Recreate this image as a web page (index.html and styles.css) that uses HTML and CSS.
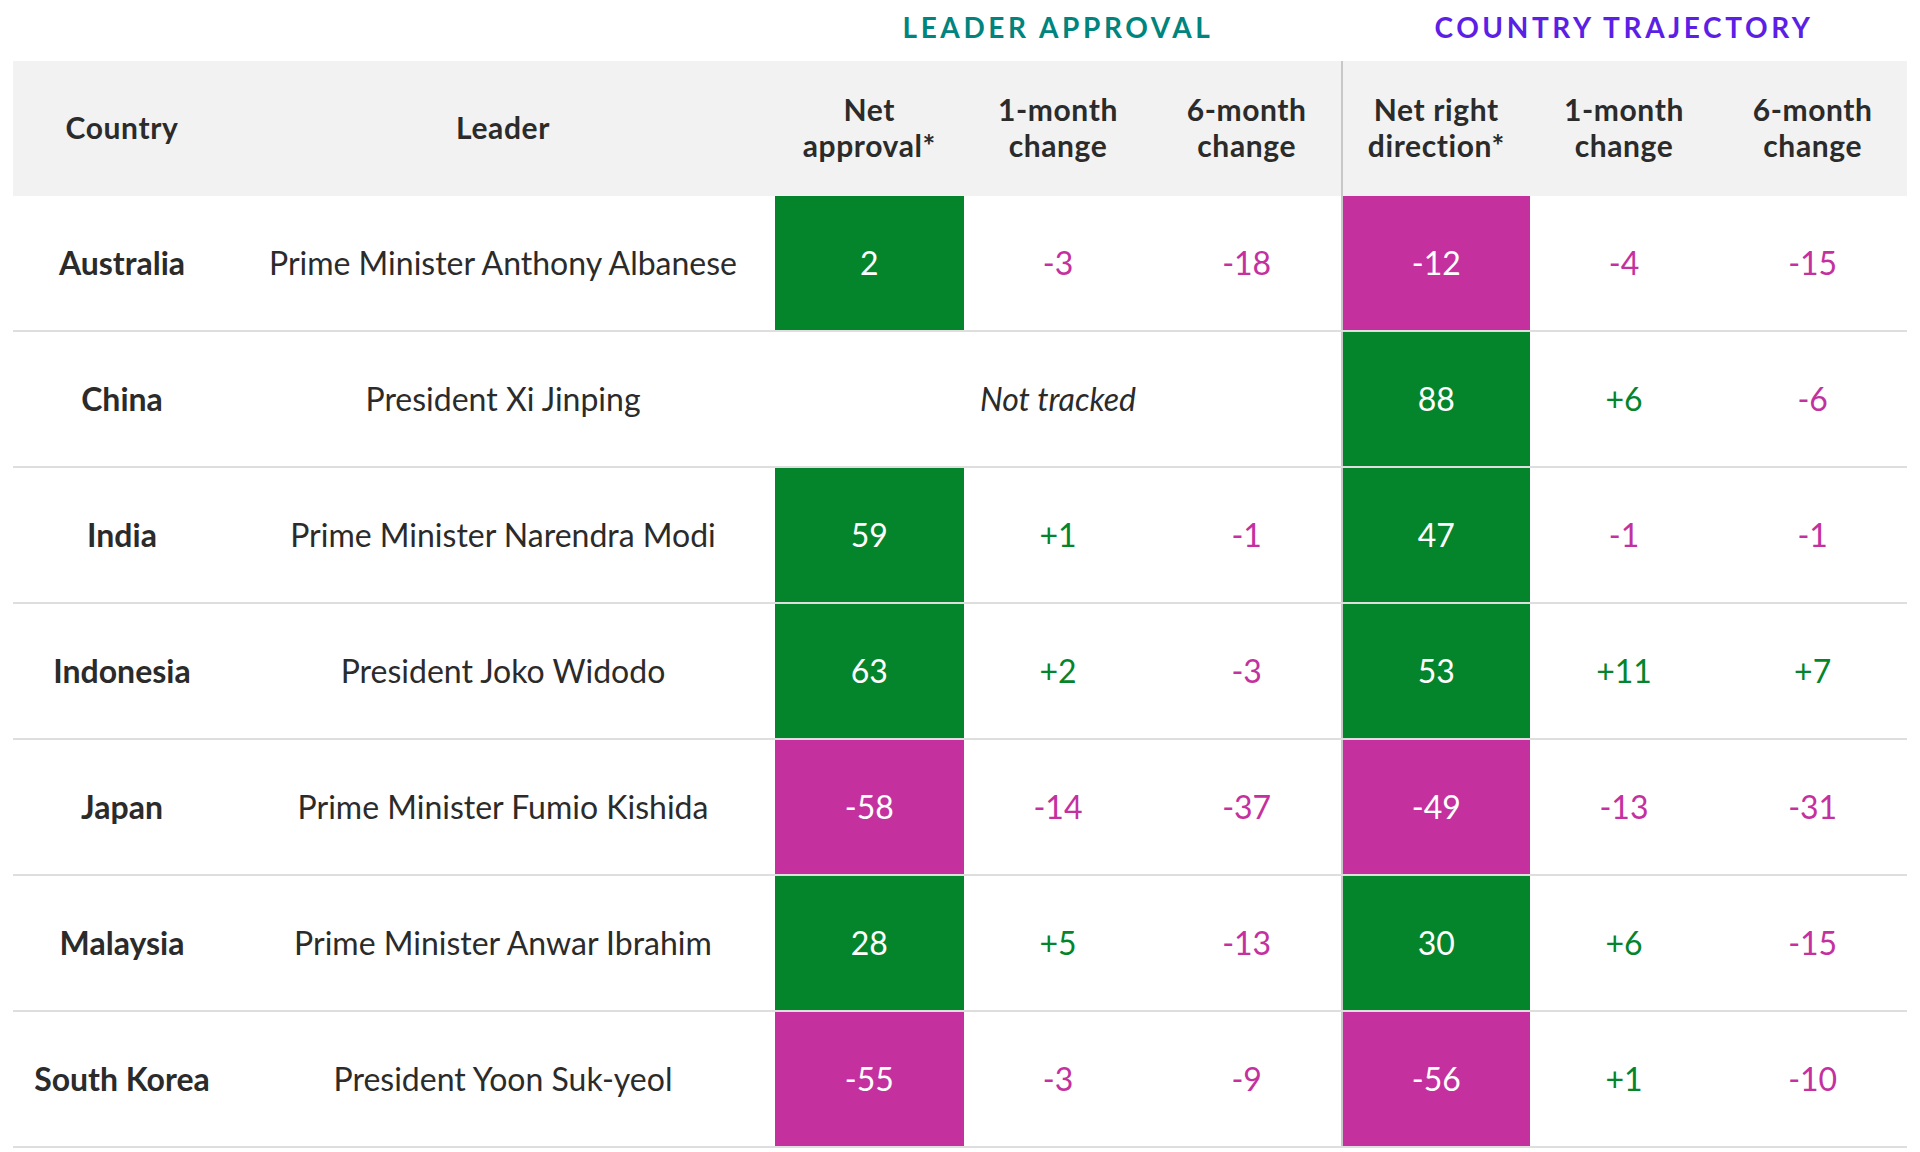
FILE: index.html
```html
<!DOCTYPE html>
<html>
<head>
<meta charset="utf-8">
<link rel="stylesheet" href="styles.css">
</head>
<body>
<div class="page">
  <div class="titles">
    <div class="title-spacer"></div>
    <div class="title leader">LEADER APPROVAL</div>
    <div class="title country">COUNTRY TRAJECTORY</div>
  </div>
  <div class="table">
    <div class="row head">
      <div class="cell">Country</div>
      <div class="cell">Leader</div>
      <div class="cell">Net<br>approval*</div>
      <div class="cell">1-month<br>change</div>
      <div class="cell">6-month<br>change</div>
      <div class="cell split">Net right<br>direction*</div>
      <div class="cell">1-month<br>change</div>
      <div class="cell">6-month<br>change</div>
    </div>

    <div class="row">
      <div class="cell name">Australia</div>
      <div class="cell">Prime Minister Anthony Albanese</div>
      <div class="cell fill-pos">2</div>
      <div class="cell neg">-3</div>
      <div class="cell neg">-18</div>
      <div class="cell split fill-neg">-12</div>
      <div class="cell neg">-4</div>
      <div class="cell neg">-15</div>
    </div>

    <div class="row">
      <div class="cell name">China</div>
      <div class="cell">President Xi Jinping</div>
      <div class="cell span3 na">Not tracked</div>
      <div class="cell split fill-pos">88</div>
      <div class="cell pos">+6</div>
      <div class="cell neg">-6</div>
    </div>

    <div class="row">
      <div class="cell name">India</div>
      <div class="cell">Prime Minister Narendra Modi</div>
      <div class="cell fill-pos">59</div>
      <div class="cell pos">+1</div>
      <div class="cell neg">-1</div>
      <div class="cell split fill-pos">47</div>
      <div class="cell neg">-1</div>
      <div class="cell neg">-1</div>
    </div>

    <div class="row">
      <div class="cell name">Indonesia</div>
      <div class="cell">President Joko Widodo</div>
      <div class="cell fill-pos">63</div>
      <div class="cell pos">+2</div>
      <div class="cell neg">-3</div>
      <div class="cell split fill-pos">53</div>
      <div class="cell pos">+11</div>
      <div class="cell pos">+7</div>
    </div>

    <div class="row">
      <div class="cell name">Japan</div>
      <div class="cell">Prime Minister Fumio Kishida</div>
      <div class="cell fill-neg">-58</div>
      <div class="cell neg">-14</div>
      <div class="cell neg">-37</div>
      <div class="cell split fill-neg">-49</div>
      <div class="cell neg">-13</div>
      <div class="cell neg">-31</div>
    </div>

    <div class="row">
      <div class="cell name">Malaysia</div>
      <div class="cell">Prime Minister Anwar Ibrahim</div>
      <div class="cell fill-pos">28</div>
      <div class="cell pos">+5</div>
      <div class="cell neg">-13</div>
      <div class="cell split fill-pos">30</div>
      <div class="cell pos">+6</div>
      <div class="cell neg">-15</div>
    </div>

    <div class="row">
      <div class="cell name">South Korea</div>
      <div class="cell">President Yoon Suk-yeol</div>
      <div class="cell fill-neg">-55</div>
      <div class="cell neg">-3</div>
      <div class="cell neg">-9</div>
      <div class="cell split fill-neg">-56</div>
      <div class="cell pos">+1</div>
      <div class="cell neg">-10</div>
    </div>
  </div>
</div>
</body>
</html>
```
FILE: styles.css
```css
html, body {
  margin: 0;
  padding: 0;
  background: #ffffff;
}

body {
  font-family: Lato, "Liberation Sans", sans-serif;
  color: #2b2b2b;
  overflow: hidden;
}

.page {
  margin-left: 13px;
  width: 1894px;
}

.titles,
.row {
  display: grid;
  grid-template-columns: 218px 544px repeat(6, 1fr);
}

.titles {
  height: 61px;
}

.title-spacer {
  grid-column: span 2;
}

.title {
  grid-column: span 3;
  text-align: center;
  font-weight: 700;
  font-size: 28px;
  letter-spacing: 3.6px;
  line-height: 54px;
}

.title.leader {
  color: #00857e;
}

.title.country {
  color: #5b1fe6;
}

.row {
  height: 136px;
  box-sizing: border-box;
  border-bottom: 2px solid #dedede;
}

.row.head {
  height: 135px;
  background: #f1f2f1;
  border-bottom: none;
}

.cell {
  display: flex;
  align-items: center;
  justify-content: center;
  text-align: center;
  font-size: 32px;
  line-height: 38px;
}

.head .cell {
  font-weight: 700;
  font-size: 30px;
  line-height: 36px;
  letter-spacing: 0.6px;
  padding-bottom: 4px;
}

.cell.name {
  font-weight: 700;
}

.cell.split {
  border-left: 2px solid #c8c8c8;
}

.cell.span3 {
  grid-column: span 3;
}

.cell.na {
  font-style: italic;
}

.cell.pos {
  color: #04852b;
}

.cell.neg {
  color: #c4319f;
}

.cell.fill-pos {
  background: #04852b;
  color: #ffffff;
}

.cell.fill-neg {
  background: #c4319f;
  color: #ffffff;
}
```
